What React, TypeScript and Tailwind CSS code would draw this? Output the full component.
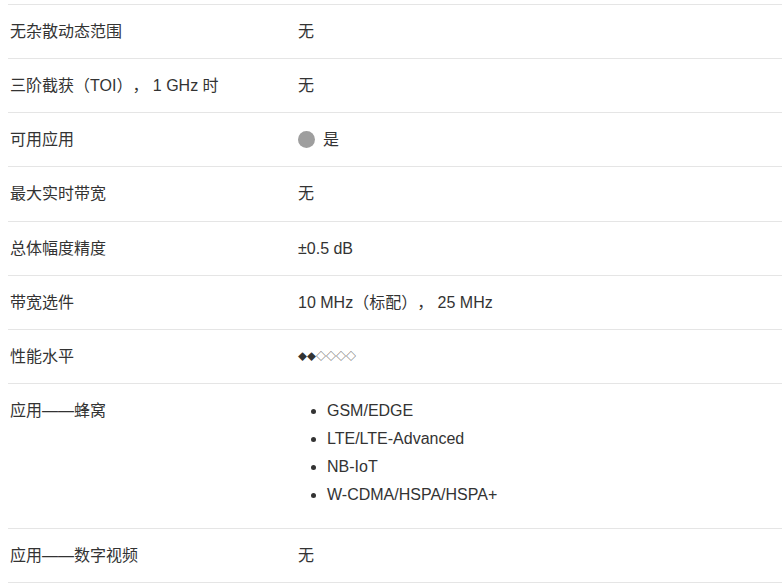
import React from "react";

const rows: { label: string; value: React.ReactNode; h: string }[] = [
  { label: "无杂散动态范围", value: "无", h: "h-[54px]" },
  { label: "三阶截获（TOI）， 1 GHz 时", value: "无", h: "h-[54px]" },
  {
    label: "可用应用",
    value: (
      <span className="flex items-center gap-2">
        <span className="inline-block w-[17px] h-[17px] rounded-full bg-[#9e9e9e]" />
        是
      </span>
    ),
    h: "h-[54px]",
  },
  { label: "最大实时带宽", value: "无", h: "h-[55px]" },
  { label: "总体幅度精度", value: "±0.5 dB", h: "h-[54px]" },
  { label: "带宽选件", value: "10 MHz（标配）， 25 MHz", h: "h-[54px]" },
  {
    label: "性能水平",
    value: (
      <span className="block text-[10px] leading-[21px]">
        <span className="text-[9px]">◆◆</span>◇◇◇◇
      </span>
    ),
    h: "h-[54px]",
  },
  {
    label: "应用——蜂窝",
    value: (
      <ul className="list-disc pl-[29px]">
        {["GSM/EDGE", "LTE/LTE-Advanced", "NB-IoT", "W-CDMA/HSPA/HSPA+"].map((t) => (
          <li key={t} className="mb-[7px]">
            {t}
          </li>
        ))}
      </ul>
    ),
    h: "h-[145px]",
  },
  { label: "应用——数字视频", value: "无", h: "h-[55px] border-b" },
];

export default function App() {
  return (
    <div
      className="w-[782px] h-[584px] overflow-hidden bg-white pt-1 pl-2 text-[16px] leading-[21px] text-[#333] [text-spacing-trim:space-all]"
      style={{ fontFamily: '"Liberation Sans", Arial, "Noto Sans CJK SC", sans-serif' }}
    >
      {rows.map((r, i) => (
        <div
          key={i}
          className={"grid grid-cols-[290px_1fr] border-t border-[#e5e5e5] py-4 " + r.h}
        >
          <div className="pl-[2px]">{r.label}</div>
          <div>{r.value}</div>
        </div>
      ))}
    </div>
  );
}
